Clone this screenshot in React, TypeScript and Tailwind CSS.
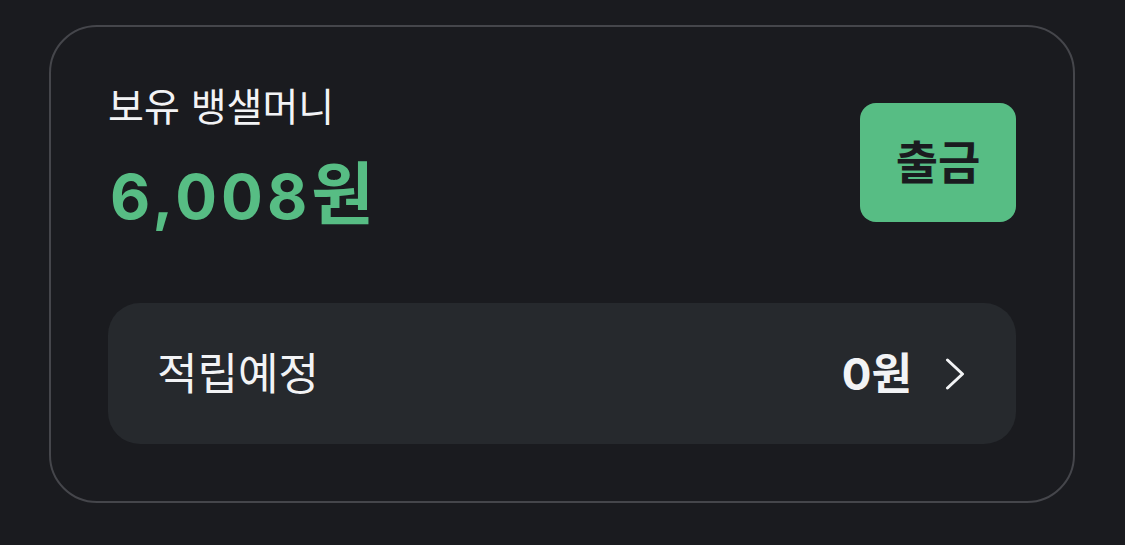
export default function App() {
  return (
    <div
      className="min-h-[545px] w-full bg-[#1a1b1f] pt-[25px] pl-[49px]"
      style={{ fontFamily: '"Inter", "Noto Sans CJK KR", sans-serif' }}
    >
      <div className="w-[1026px] h-[478px] rounded-[48px] border-2 border-[#45464b] px-[57px] pt-[76px] pb-[57px] flex flex-col justify-between">
        {/* Balance */}
        <div className="flex items-start justify-between">
          <div className="flex flex-col -mt-[22px]">
            <span className="text-[39px] leading-[52px] text-[#f2f3f5]">보유 뱅샐머니</span>
            <div className="mt-[14px] pl-[2px] flex items-baseline font-bold text-[#57bd84] leading-[86px]">
              <span className="text-[62px] tracking-[4px]">6,008</span>
              <span className="text-[68px]" style={{ fontFamily: '"Noto Sans CJK KR", sans-serif' }}>원</span>
            </div>
          </div>
          <button className="w-[156px] h-[119px] rounded-[16px] bg-[#57bd84] text-[46px] font-bold text-[#1a1b1f]">
            출금
          </button>
        </div>

        {/* Pending */}
        <div className="h-[141px] rounded-[32px] bg-[#26292d] flex items-center justify-between pl-[49px] pr-[51px]">
          <span className="text-[44px] text-[#f2f3f5]">적립예정</span>
          <div className="flex items-center gap-[33px]">
            <span className="text-[44px] font-bold text-[#f2f3f5]">0원</span>
            <svg width="20" height="32" viewBox="0 0 20 32" fill="none">
              <path d="M2.5 2 L17.5 16 L2.5 30" stroke="#f2f3f5" strokeWidth="3" strokeLinecap="round" strokeLinejoin="round" />
            </svg>
          </div>
        </div>
      </div>
    </div>
  );
}
